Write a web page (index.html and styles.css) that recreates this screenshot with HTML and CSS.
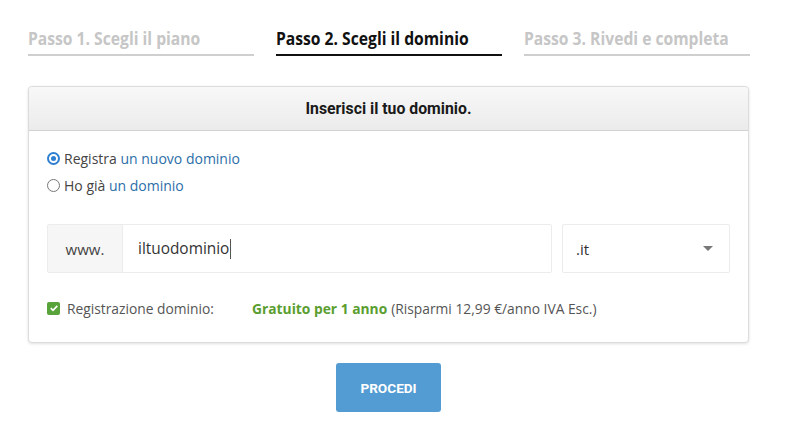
FILE: index.html
```html
<!DOCTYPE html>
<html lang="it">
<head>
<meta charset="utf-8">
<link rel="stylesheet" href="styles.css">
</head>
<body>
<div class="page">
  <div class="steps">
    <div class="step"><span class="step-text">Passo 1. Scegli il piano</span></div>
    <div class="step active"><span class="step-text">Passo 2. Scegli il dominio</span></div>
    <div class="step"><span class="step-text">Passo 3. Rivedi e completa</span></div>
  </div>

  <div class="card">
    <div class="card-head">Inserisci il tuo dominio.</div>
    <div class="card-body">
      <div class="radios">
        <label class="radio-row"><span class="radio checked"></span>Registra <span class="link">un nuovo dominio</span></label>
        <label class="radio-row"><span class="radio"></span>Ho già <span class="link">un dominio</span></label>
      </div>

      <div class="domain-row">
        <div class="input-group">
          <div class="addon">www.</div>
          <div class="field">iltuodominio<span class="caret"></span></div>
        </div>
        <div class="select">
          <span>.it</span>
          <span class="arrow"></span>
        </div>
      </div>

      <div class="check-row">
        <span class="checkbox"><svg width="10" height="10" viewBox="0 0 10 10"><path d="M1.8 5.2 L4 7.3 L8.3 2.8" fill="none" stroke="#fff" stroke-width="1.7"/></svg></span>
        <span class="check-label">Registrazione dominio:</span>
        <span class="free">Gratuito per 1 anno</span>
        <span class="save">(Risparmi 12,99 €/anno IVA Esc.)</span>
      </div>
    </div>
  </div>

  <div class="actions">
    <button class="btn">PROCEDI</button>
  </div>
</div>
</body>
</html>
```

FILE: styles.css
```css
* { box-sizing: border-box; }
html, body { margin: 0; padding: 0; background: #fff; }
body { font-family: "Open Sans", "Liberation Sans", sans-serif; color: #444; }

.page { width: 722px; margin-left: 28px; padding-top: 28px; }

.steps { display: grid; grid-template-columns: 226px 226px 226px; column-gap: 22px; }
.step {
  height: 28px; line-height: 21px;
  border-bottom: 2px solid #cfcfcf;
  white-space: nowrap;
}
.step-text {
  display: inline-block;
  font-size: 18px; font-weight: 700; color: #c6c6c6;
  transform: scaleX(0.87); transform-origin: left center;
}
.step.active { border-bottom-color: #111; }
.step.active .step-text { color: #111; }

.card {
  margin-top: 30px; width: 721px;
  border: 1px solid #dcdcdc; border-radius: 4px;
  box-shadow: 0 1px 3px rgba(0,0,0,0.12);
  background: #fff;
}
.card-head {
  height: 44px; display: flex; align-items: center; justify-content: center;
  font-family: Roboto, "Liberation Sans", sans-serif; font-weight: 700; font-size: 15.8px; color: #1a1a1a;
  background: linear-gradient(#f8f8f8, #ebebeb);
  border-bottom: 1px solid #d2d2d2;
  border-radius: 4px 4px 0 0;
}
.card-body { padding: 14px 18px 24px 18px; }

.radios { display: flex; flex-direction: column; }
.radio-row { display: flex; align-items: center; height: 27px; font-size: 14px; color: #444; white-space: pre; }
.radio {
  width: 13px; height: 13px; border-radius: 50%; border: 1px solid #777;
  margin-right: 4px; position: relative; flex: none;
}
.radio.checked { border: 2px solid #2e7fd0; }
.radio.checked::after {
  content: ""; position: absolute; left: 2px; top: 2px; width: 5px; height: 5px; border-radius: 50%; background: #2e7fd0;
}
.link { color: #2b6ea8; }

.domain-row { display: flex; gap: 10px; margin-top: 25px; height: 49px; }
.input-group { display: flex; flex: 1; border: 1px solid #ececec; border-radius: 2px; }
.addon {
  width: 75px; background: #f6f6f6; border-right: 1px solid #ececec;
  display: flex; align-items: center; justify-content: center; font-size: 15px; color: #444;
}
.field { flex: 1; display: flex; align-items: center; padding-left: 15px; font-size: 15.4px; color: #333; }
.caret { display: inline-block; width: 1px; height: 20px; background: #555; margin-left: 1px; }
.select {
  width: 168px; border: 1px solid #ececec; border-radius: 2px;
  display: flex; align-items: center; justify-content: space-between; padding: 0 16px 0 13px;
  font-size: 15px; color: #333;
}
.arrow { width: 0; height: 0; border-left: 5px solid transparent; border-right: 5px solid transparent; border-top: 5px solid #777; }

.check-row { display: flex; align-items: center; margin-top: 25px; font-size: 13.8px; color: #555; height: 20px; }
.checkbox {
  width: 13px; height: 13px; background: #58a33a; border-radius: 2px; margin-right: 7px;
  display: flex; align-items: center; justify-content: center; flex: none;
}
.check-label { width: 185px; }
.free { color: #5a9e2f; font-weight: 700; margin-right: 4px; }
.save { color: #555; }

.actions { width: 721px; display: flex; justify-content: center; margin-top: 20px; }
.btn {
  width: 105px; height: 49px; border: none; border-radius: 3px;
  background: #529bd3; color: #fff;
  font-family: Roboto, "Liberation Sans", sans-serif; font-weight: 700; font-size: 13.6px;
}
```
